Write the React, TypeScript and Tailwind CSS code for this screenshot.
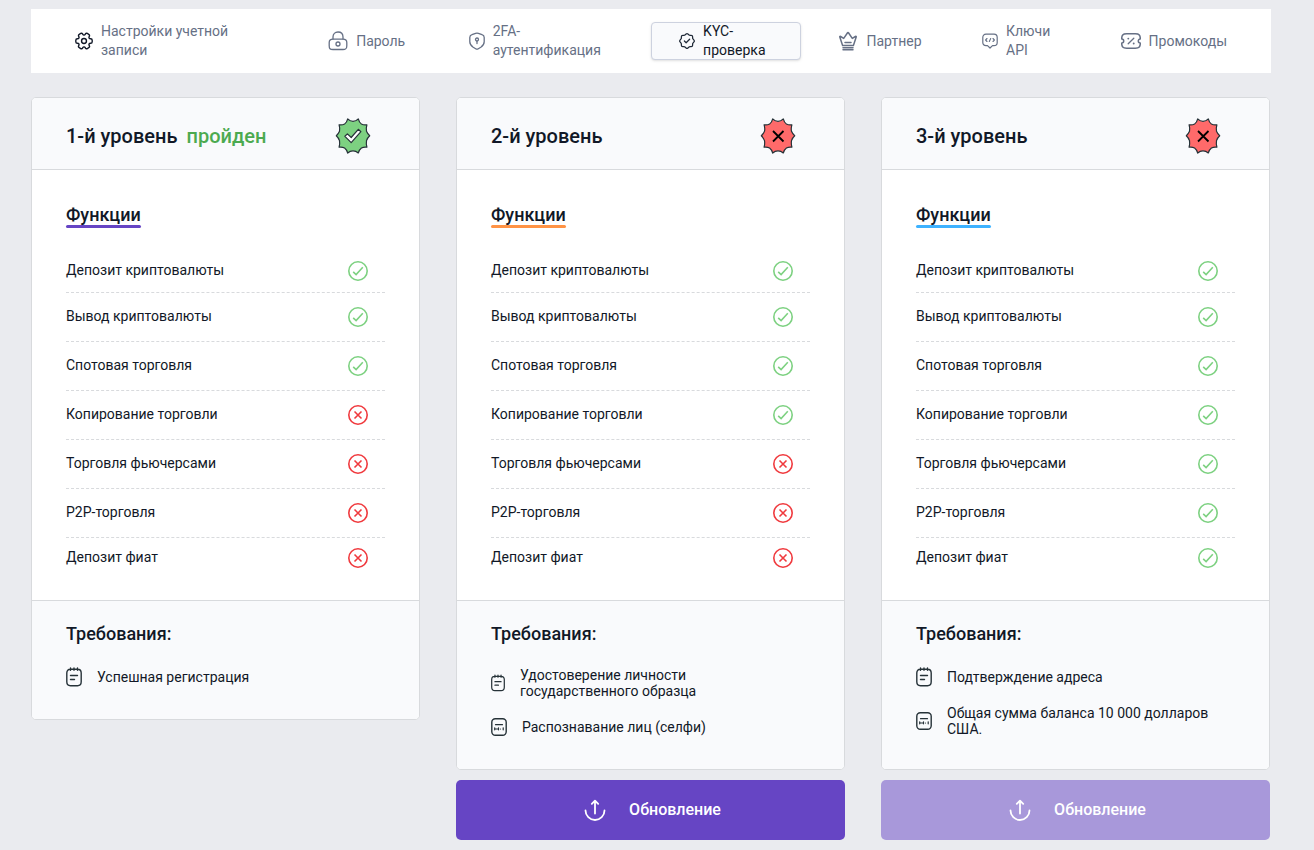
import type { ReactNode } from "react";
import clsx from "clsx";

type Level = {
  title: string;
  passed: boolean;
  underline: string;
  features: boolean[];
  requirements: { text: string; icon: "note" | "card"; small?: boolean }[];
  action?: "active" | "disabled";
};

const FEATURES = [
  "Депозит криптовалюты",
  "Вывод криптовалюты",
  "Спотовая торговля",
  "Копирование торговли",
  "Торговля фьючерсами",
  "P2P-торговля",
  "Депозит фиат",
];

const LEVELS: Level[] = [
  {
    title: "1-й уровень",
    passed: true,
    underline: "bg-[#6645c4]",
    features: [true, true, true, false, false, false, false],
    requirements: [{ text: "Успешная регистрация", icon: "note" }],
  },
  {
    title: "2-й уровень",
    passed: false,
    underline: "bg-[#ff9345]",
    features: [true, true, true, true, false, false, false],
    requirements: [
      {
        text: "Удостоверение личности государственного образца",
        icon: "note",
        small: true,
      },
      { text: "Распознавание лиц (селфи)", icon: "card" },
    ],
    action: "active",
  },
  {
    title: "3-й уровень",
    passed: false,
    underline: "bg-[#3eb2ff]",
    features: [true, true, true, true, true, true, true],
    requirements: [
      { text: "Подтверждение адреса", icon: "note" },
      { text: "Общая сумма баланса 10 000 долларов США.", icon: "card" },
    ],
    action: "disabled",
  },
];

function Icon({
  className,
  viewBox = "0 0 20 20",
  children,
}: {
  className: string;
  viewBox?: string;
  children: ReactNode;
}) {
  return (
    <svg
      className={clsx("shrink-0", className)}
      viewBox={viewBox}
      fill="none"
      stroke="currentColor"
      strokeWidth="1.3"
      strokeLinecap="round"
      strokeLinejoin="round"
      aria-hidden="true"
    >
      {children}
    </svg>
  );
}

function GearIcon() {
  return (
    <Icon className="size-[18px] text-[#111827]" viewBox="1 1 22 22">
      <g strokeWidth="1.7">
        <circle cx="12" cy="12" r="3" />
        <path d="M2 12.88v-1.76c0-1.04.85-1.9 1.9-1.9 1.81 0 2.55-1.28 1.64-2.85-.52-.9-.21-2.07.7-2.59l1.73-.99c.79-.47 1.81-.19 2.28.6l.11.19c.9 1.57 2.38 1.57 3.29 0l.11-.19c.47-.79 1.49-1.07 2.28-.6l1.73.99c.91.52 1.22 1.69.7 2.59-.91 1.57-.17 2.85 1.64 2.85 1.04 0 1.9.85 1.9 1.9v1.76c0 1.04-.85 1.9-1.9 1.9-1.81 0-2.55 1.28-1.64 2.85.52.91.21 2.07-.7 2.59l-1.73.99c-.79.47-1.81.19-2.28-.6l-.11-.19c-.9-1.57-2.38-1.57-3.29 0l-.11.19c-.47.79-1.49 1.07-2.28.6l-1.73-.99a1.9 1.9 0 0 1-.7-2.59c.91-1.57.17-2.85-1.64-2.85-1.05 0-1.9-.86-1.9-1.9Z" />
      </g>
    </Icon>
  );
}

function LockIcon() {
  return (
    <Icon className="size-5">
      <path d="M5 8V6c0-3 2-5 5-5s5 2 5 5v2" />
      <path d="M5 8.200h10c3 0 3.800.8 3.800 3.300v3.200c0 3-.8 3.800-3.800 3.800H5c-3 0-3.800-.8-3.800-3.800v-3.200c0-2.500.8-3.300 3.800-3.300Z" />
      <circle cx="10" cy="13" r="2" />
    </Icon>
  );
}

function ShieldIcon() {
  return (
    <Icon className="h-[18px] w-4" viewBox="0 0 16 18">
      <path d="M6.600 1.300 3 2.600C1.500 3.100.8 4.100.8 5.500v4.300c0 2.600 1.300 4.100 3.400 5.500l2.500 1.500c.8.5 1.800.5 2.600 0l2.500-1.500c2.100-1.400 3.400-2.900 3.400-5.500V5.500c0-1.400-.7-2.400-2.200-2.900L9.400 1.300a4 4 0 0 0-2.800 0Z" />
      <circle cx="8" cy="7.500" r="1.500" />
      <path d="M8 9v2.500" />
    </Icon>
  );
}

function VerifyIcon() {
  return (
    <Icon className="size-4 text-[#1f2937]" viewBox="1 1 22 22">
      <g strokeWidth="1.7">
        <path d="m8.400 12 2.400 2.400 4.800-4.800" />
        <path d="M10.750 2.450c.69-.59 1.820-.59 2.520 0l1.580 1.360c.3.26.86.47 1.260.47h1.700c1.060 0 1.930.87 1.930 1.930v1.700c0 .39.210.96.470 1.260l1.360 1.580c.59.69.59 1.820 0 2.520l-1.360 1.580c-.26.300-.47.860-.47 1.260v1.700c0 1.060-.87 1.930-1.930 1.930h-1.700c-.39 0-.96.210-1.260.470l-1.580 1.360c-.69.59-1.820.59-2.520 0l-1.580-1.360c-.3-.26-.86-.47-1.260-.47H6.180c-1.060 0-1.930-.87-1.930-1.930v-1.710c0-.39-.21-.95-.46-1.250l-1.350-1.590c-.58-.69-.58-1.810 0-2.500l1.350-1.590c.25-.3.460-.86.460-1.250V6.200c0-1.060.87-1.930 1.930-1.930h1.730c.39 0 .96-.21 1.260-.47l1.580-1.350Z" />
      </g>
    </Icon>
  );
}

function CrownIcon() {
  return (
    <Icon className="size-5">
      <path
        strokeWidth="1.5"
        d="m4.600 14.500-2.800-8.500c-.2-.6.3-.8.8-.5l3.100 1.900L9.400 2c.3-.7.900-.7 1.200 0l3.700 5.400 3.100-1.900c.5-.3 1 0 .8.500l-2.800 8.500ZM5 16.800h10M5 18.800h10M7 11.500h6"
      />
    </Icon>
  );
}

function ApiIcon() {
  return (
    <Icon className="size-4" viewBox="0 0 16 16">
      <path
        strokeWidth="1.200"
        d="M4 1.200h8c2 0 3.200 1.200 3.200 3.200v5c0 2-1.200 3.200-3.200 3.200h-1.500L8 15l-2.500-2.400H4C2 12.600.8 11.400.8 9.400v-5c0-2 1.200-3.200 3.200-3.200Z"
      />
      <path strokeWidth="1.100" d="M5 5.500 3.600 7 5 8.500M11 5.500 12.400 7 11 8.500M8.700 5.500l-1.400 3" />
    </Icon>
  );
}

function CouponIcon() {
  return (
    <Icon className="h-4 w-5" viewBox="0 0 20 16">
      <path
        strokeWidth="1.500"
        d="M17.300 8c0-1.100.8-2 2-2 0-4-1-5.200-5-5.200H5.700C1.700.8.7 2 .7 6c1.200 0 2 .9 2 2s-.8 2-2 2c0 4 1 5.200 5 5.200h8.600c4 0 5-1.200 5-5.200-1.200 0-2-.9-2-2Z"
      />
      <path d="m7.200 10.800 5.600-5.600" />
      <path strokeWidth="1.900" d="M7.300 5.600h.01M12.700 10.500h.01" />
    </Icon>
  );
}

function StatusIcon({ ok }: { ok: boolean }) {
  return (
    <svg
      className={clsx("size-5 shrink-0", ok ? "text-[#7dd181]" : "text-[#f03a3e]")}
      viewBox="0 0 20 20"
      fill="none"
      stroke="currentColor"
      strokeWidth="1.600"
      role="img"
      aria-label={ok ? "Доступно" : "Недоступно"}
    >
      <circle cx="10" cy="10" r="9.200" />
      {ok ? (
        <path d="m5.200 10.800 2.900 2.700 6.700-7.200" />
      ) : (
        <path d="m6.500 6.500 7 7M13.500 6.500l-7 7" />
      )}
    </svg>
  );
}

function LevelBadge({ passed }: { passed: boolean }) {
  return (
    <svg className="size-9 shrink-0" viewBox="0 0 36 36" aria-hidden="true">
      <path
        d="M18 3.400Q21 3.400 23.300.9Q24.200 4.600 26.400 6Q28.900 7.300 31.900 6.800Q30.800 10.500 31.500 13.300Q32.600 15.900 34.700 17.800Q32.300 20 31.500 22.700Q31 25.700 31.900 29.200Q28.800 28.700 26.400 30Q24.200 31.600 23.300 35Q21 32.800 18 32.800Q15 32.800 12.700 35Q11.800 31.600 9.600 30Q7.200 28.700 4.100 29.200Q5 25.700 4.500 22.700Q3.700 20 1.300 17.800Q3.400 15.900 4.500 13.300Q5.200 10.500 4.100 6.800Q7.100 7.300 9.600 6Q11.800 4.600 12.700.9Q15 3.400 18 3.400Z"
        fill={passed ? "#7dd181" : "#ff6a6a"}
        stroke="#263238"
        strokeWidth="1.2"
        strokeLinejoin="round"
      />
      {passed ? (
        <path
          d="m9.900 18.300 2.500-2.400 3.800 3.600 7.100-8.200 2.600 2.400-9.700 11Z"
          fill="#fff"
          stroke="#263238"
          strokeWidth="1.2"
          strokeLinejoin="round"
        />
      ) : (
        <path d="m13 13 10.500 10.500M23.500 13 13 23.500" fill="none" stroke="#000" strokeWidth="1.8" />
      )}
    </svg>
  );
}

function NoteIcon({ small }: { small?: boolean }) {
  return (
    <Icon
      className={clsx("text-[#263238]", small ? "h-[18px] w-3.5" : "h-5 w-4")}
      viewBox="0 0 16 20"
    >
      <path
        strokeWidth="1.400"
        d="M4.500 2.300h7c2.400 0 3.700 1.200 3.700 3.700v8.800c0 2.700-1.300 3.900-3.700 3.900h-7C2.100 18.700.8 17.500.8 14.800V6c0-2.500 1.300-3.700 3.700-3.700ZM4.500 1v2.300M8 1v2.300M11.500 1v2.300M4.500 8.500h7M4.500 12.500h4"
      />
    </Icon>
  );
}

function CardIcon() {
  return (
    <Icon className="h-5 w-4 text-[#263238]" viewBox="0 0 16 20">
      <rect x=".8" y="1.700" width="14.400" height="16.600" rx="3.500" strokeWidth="1.400" />
      <path
        strokeWidth="1.200"
        d="M4.500 7.700h7M3.700 10.800v2M3.700 12h3.800M7.500 10.800v2M9.500 12h.01M12.200 10.800v2"
      />
    </Icon>
  );
}

function UploadIcon() {
  return (
    <Icon className="size-[22px]" viewBox="0 0 22 22">
      <path
        strokeWidth="1.800"
        d="M11 14.500V2M7.800 4.900 11 1.600l3.200 3.300M1.500 11.500a9.500 9.500 0 0 0 19 0"
      />
    </Icon>
  );
}

const TABS = [
  { label: "Настройки учетной записи", icon: <GearIcon />, width: "max-w-36" },
  { label: "Пароль", icon: <LockIcon /> },
  { label: "2FA-аутентификация", icon: <ShieldIcon />, width: "max-w-28" },
  { label: "KYC-проверка", icon: <VerifyIcon />, width: "max-w-[70px]", active: true },
  { label: "Партнер", icon: <CrownIcon /> },
  { label: "Ключи API", icon: <ApiIcon />, width: "max-w-12" },
  { label: "Промокоды", icon: <CouponIcon /> },
];

function SettingsNav() {
  return (
    <nav className="grid h-16 grid-cols-[254fr_141fr_183fr_188fr_144fr_139fr_103fr] items-center bg-white px-11 text-[14px] leading-[19px] text-[#667085]">
      {TABS.map((tab) => (
        <a
          key={tab.label}
          href="#"
          aria-current={tab.active ? "page" : undefined}
          className={clsx(
            "flex items-center gap-2 justify-self-start",
            tab.active &&
              "h-[38px] rounded border border-[#cdd2df] bg-[#f9fafc] px-[27px] text-[#111827] shadow-sm"
          )}
        >
          {tab.icon}
          <span className={tab.width}>{tab.label}</span>
        </a>
      ))}
    </nav>
  );
}

function LevelCard({ level }: { level: Level }) {
  return (
    <div className="flex flex-col gap-2.5">
      <article className="overflow-hidden rounded-[5px] border border-[#d8dadd] bg-white">
        <header className="flex h-[72px] items-center justify-between border-b border-[#d8dadd] bg-[#f9fafc] pt-1 pr-12 pl-[34px]">
          <h2 className="text-[20px] font-medium">
            {level.title}
            {level.passed && <span className="ml-[9px] text-[#4caa50]">пройден</span>}
          </h2>
          <LevelBadge passed={level.passed} />
        </header>

        <section className="px-[34px] pt-[34px] pb-[22px]">
          <h3 className="w-fit text-[18px] leading-[21px] font-medium">
            Функции
            <span className={clsx("block h-[3px] rounded-full", level.underline)} />
          </h3>
          <ul className="mt-[22px]">
            {FEATURES.map((feature, i) => (
              <li
                key={feature}
                className="flex h-[49px] items-center justify-between border-b border-dashed border-[#d8dadd] pr-[17px] first:h-[43px] last:h-10 last:border-b-0"
              >
                <span className="pb-0.5">{feature}</span>
                <StatusIcon ok={level.features[i]} />
              </li>
            ))}
          </ul>
        </section>

        <section className="border-t border-[#d8dadd] bg-[#f9fafc] px-[34px] pt-[22px] pb-8">
          <h3 className="text-[18px] leading-[22px] font-medium">Требования:</h3>
          <ul className="mt-[22px] flex flex-col gap-[18px] pr-4">
            {level.requirements.map((req) => (
              <li key={req.text} className="flex min-h-5 items-center gap-[15px] leading-4">
                {req.icon === "note" ? <NoteIcon small={req.small} /> : <CardIcon />}
                <span>{req.text}</span>
              </li>
            ))}
          </ul>
        </section>
      </article>

      {level.action && (
        <button
          type="button"
          disabled={level.action === "disabled"}
          className="flex h-[60px] items-center justify-center gap-[23px] rounded-[5px] bg-[#6645c4] pl-1 text-[16px] font-medium text-white disabled:bg-[#a898da]"
        >
          <UploadIcon />
          Обновление
        </button>
      )}
    </div>
  );
}

export default function App() {
  return (
    <main className="min-h-screen bg-[#eaebef] pt-[9px] pr-[43px] pb-2.5 pl-[31px] font-['Roboto',sans-serif] text-[14px] text-[#111827]">
      <SettingsNav />
      <div className="mt-6 grid grid-cols-3 items-start gap-9 pr-px">
        {LEVELS.map((level) => (
          <LevelCard key={level.title} level={level} />
        ))}
      </div>
    </main>
  );
}
